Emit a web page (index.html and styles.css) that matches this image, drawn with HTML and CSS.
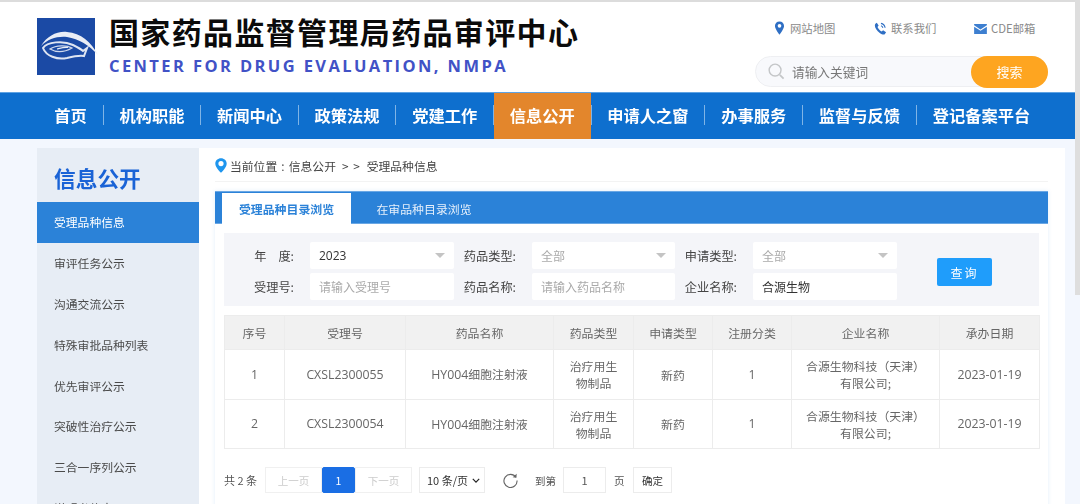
FILE: index.html
```html
<!DOCTYPE html>
<html lang="zh-CN">
<head>
<meta charset="utf-8">
<title>受理品种信息</title>
<link rel="stylesheet" href="styles.css">
</head>
<body>
<div class="shell">
<div class="page">
  <header class="top">
    <svg class="logo" viewBox="0 0 58 57" aria-hidden="true">
      <rect width="58" height="57" fill="#1b4aa5"/>
      <path d="M4 28C10 18 20 13 30 14C44 15 54 24 61 37C52 27 42 21 30 19C20 18 11 21 4 28Z" fill="#e9edf6"/>
      <path d="M6 30C10 24 26 22 36 27C40 29 44 31 46 33L50 30L47 38C42 37 38 38 30 40C20 42 9 38 6 30Z" fill="none" stroke="#dfe5f2" stroke-width="2"/>
      <path d="M13 31C19 27 30 27 35 30C28 34 20 35 13 31Z" fill="none" stroke="#cfd8ec" stroke-width="1.3"/>
      <path d="M20 31C24 30 27 29 31 29.500" fill="none" stroke="#e8edf6" stroke-width="1.100"/>
    </svg>
    <div class="brand">
      <div class="brand-cn">国家药品监督管理局药品审评中心</div>
      <div class="brand-en">CENTER FOR DRUG EVALUATION, NMPA</div>
    </div>
    <div class="top-right">
      <div class="links">
        <a class="link link-map">
          <svg class="ic" viewBox="0 0 12 16"><path d="M6 0.5C2.9 0.5 0.8 2.8 0.8 5.6C0.8 9 6 15.5 6 15.5S11.2 9 11.2 5.6C11.2 2.8 9.100 0.5 6 0.5ZM6 7.600A2.100 2.100 0 1 1 6 3.400A2.100 2.100 0 0 1 6 7.600Z" fill="#2f6fc4"/></svg>
          网站地图</a>
        <a class="link link-tel">
          <svg class="ic-w" viewBox="0 0 14 14"><path d="M3 .8 5 3.800 3.800 5.300C4.500 7.200 6.300 9.300 8.300 10.200L9.800 8.900 13 11 11.600 13.200C10.500 13.900 8.500 13.500 6.200 11.800 3.200 9.600.8 6.300.9 3.500 1 2.300 1.800 1.200 3 .8Z" fill="#2f6fc4"/><path d="M7.500 1.500C9.800 2 11.500 3.800 12 6.200M7.500 4C8.500 4.300 9.300 5 9.600 6.200" fill="none" stroke="#2f6fc4" stroke-width="1.200"/></svg>
          联系我们</a>
        <a class="link">
          <svg class="ic-m" viewBox="0 0 14 11"><path d="M0 0H14V1.500L7 6 0 1.500Z M0 3 7 7.500 14 3V11H0Z" fill="#3d7fd0"/></svg>
          CDE邮箱</a>
      </div>
      <div class="search">
        <svg class="search-ic" viewBox="0 0 18 18"><circle cx="7.500" cy="7.500" r="6.300" fill="none" stroke="#c4c6c8" stroke-width="1.500"/><path d="M12.500 12.500 16.500 16.500" stroke="#c4c6c8" stroke-width="1.800"/></svg>
        <span class="search-ph">请输入关键词</span>
        <span class="search-btn">搜索</span>
      </div>
    </div>
  </header>

  <nav class="nav">
    <a class="nav-item">首页</a><i class="sep"></i>
    <a class="nav-item">机构职能</a><i class="sep"></i>
    <a class="nav-item">新闻中心</a><i class="sep"></i>
    <a class="nav-item">政策法规</a><i class="sep"></i>
    <a class="nav-item">党建工作</a><i class="sep"></i>
    <a class="nav-item on">信息公开</a><i class="sep"></i>
    <a class="nav-item">申请人之窗</a><i class="sep"></i>
    <a class="nav-item">办事服务</a><i class="sep"></i>
    <a class="nav-item">监督与反馈</a><i class="sep"></i>
    <a class="nav-item">登记备案平台</a>
  </nav>

  <div class="body">
    <aside class="side">
      <h2 class="side-title">信息公开</h2>
      <a class="side-item on">受理品种信息</a>
      <a class="side-item">审评任务公示</a>
      <a class="side-item">沟通交流公示</a>
      <a class="side-item">特殊审批品种列表</a>
      <a class="side-item">优先审评公示</a>
      <a class="side-item">突破性治疗公示</a>
      <a class="side-item">三合一序列公示</a>
      <a class="side-item">说明书信息</a>
    </aside>
    <main class="main">
      <div class="crumb">
        <svg class="crumb-ic" viewBox="0 0 12 15"><path d="M6 0.300C2.800 0.300 0.300 2.700 0.300 5.700C0.300 9.300 6 14.800 6 14.800S11.700 9.300 11.700 5.700C11.700 2.700 9.200 0.300 6 0.300ZM6 8.200A2.600 2.600 0 1 1 6 3A2.600 2.600 0 0 1 6 8.200Z" fill="#1f96ee"/></svg>
        <span class="crumb-a">当前位置 : 信息公开</span><span class="crumb-gt">&gt; &gt;</span><span>受理品种信息</span>
      </div>
      <div class="panel">
        <div class="tabs">
          <a class="tab on">受理品种目录浏览</a>
          <a class="tab">在审品种目录浏览</a>
        </div>
        <div class="filter">
          <div class="grid">
            <label class="lab">年<b class="gap"></b>度:</label>
            <div class="field sel"><span class="val">2023</span><i class="caret"></i></div>
            <label class="lab">药品类型:</label>
            <div class="field sel"><span class="ph">全部</span><i class="caret"></i></div>
            <label class="lab">申请类型:</label>
            <div class="field sel"><span class="ph">全部</span><i class="caret"></i></div>
            <label class="lab">受理号:</label>
            <div class="field"><span class="ph">请输入受理号</span></div>
            <label class="lab">药品名称:</label>
            <div class="field"><span class="ph">请输入药品名称</span></div>
            <label class="lab">企业名称:</label>
            <div class="field"><span class="val">合源生物</span></div>
          </div>
          <a class="query">查询</a>
        </div>
        <table class="tbl">
          <colgroup>
            <col class="c1"><col class="c2"><col class="c3"><col class="c4"><col class="c5"><col class="c6"><col class="c7"><col class="c8">
          </colgroup>
          <thead>
            <tr><th>序号</th><th>受理号</th><th>药品名称</th><th>药品类型</th><th>申请类型</th><th>注册分类</th><th>企业名称</th><th>承办日期</th></tr>
          </thead>
          <tbody>
            <tr><td class="lat">1</td><td class="lat">CXSL2300055</td><td><span class="lat">HY004</span>细胞注射液</td><td>治疗用生<br>物制品</td><td>新药</td><td class="lat">1</td><td>合源生物科技（天津）<br>有限公司;</td><td class="lat">2023-01-19</td></tr>
            <tr><td class="lat">2</td><td class="lat">CXSL2300054</td><td><span class="lat">HY004</span>细胞注射液</td><td>治疗用生<br>物制品</td><td>新药</td><td class="lat">1</td><td>合源生物科技（天津）<br>有限公司;</td><td class="lat">2023-01-19</td></tr>
          </tbody>
        </table>
        <div class="pager">
          <span class="total">共 2 条</span>
          <div class="pages">
            <a class="pg">上一页</a><a class="pg cur">1</a><a class="pg">下一页</a>
          </div>
          <div class="size"><span>10 条/页</span>
            <svg class="chev" viewBox="0 0 10 6"><path d="M1 1 5 5 9 1" fill="none" stroke="#222" stroke-width="1.500"/></svg>
          </div>
          <svg class="refresh" viewBox="0 0 16 16"><path d="M13.800 4.500A7 7 0 1 0 15 8" fill="none" stroke="#666" stroke-width="1.200"/><path d="M14.600 .8 14.300 5 10.300 4.400Z" fill="#666"/></svg>
          <span class="to">到第</span>
          <span class="jump">1</span>
          <span class="unit">页</span>
          <a class="ok">确定</a>
        </div>
      </div>
    </main>
  </div>
</div>
<div class="scroll"><div class="thumb"></div></div>
</div>
</body>
</html>
```

FILE: styles.css
```css
* { box-sizing: border-box; }
html, body { margin: 0; height: 504px; overflow: hidden; }
body { font-family: "Noto Sans CJK SC", "Noto Sans", sans-serif; background: #f3f7fe; color: #333; }
a { text-decoration: none; color: inherit; }

.shell { display: flex; height: 504px; filter: blur(.35px); }
.page { flex: 1; min-width: 0; overflow: hidden; }
.scroll { width: 5px; }
.thumb { height: 295px; background: #dedede; }

.top { height: 92px; background: #fff; border-top: 2px solid #dcdcdc; display: flex; padding: 16px 27px 0 37px; }
.logo { width: 58px; height: 57px; flex: none; overflow: visible; }
.brand { margin-left: 14px; }
.brand-cn { font-size: 30px; font-weight: 700; line-height: 30px; letter-spacing: 1.350px; color: #0b0b0b; white-space: nowrap; margin-top: -2px; }
.brand-en { font-family: "Open Sans", sans-serif; font-size: 16.500px; font-weight: 700; line-height: 22px; letter-spacing: 2.400px; color: #4152c6; margin-top: 9px; white-space: nowrap; }
.top-right { margin-left: auto; width: 293px; display: flex; flex-direction: column; }
.links { display: flex; height: 20px; padding-left: 19px; font-size: 11.350px; color: #8a8a8a; }
.link { display: flex; align-items: center; white-space: nowrap; }
.link-map { width: 100px; }
.link-tel { width: 100px; }
.ic { width: 11px; height: 14px; margin-right: 5px; }
.ic-w { width: 13px; height: 13px; margin-right: 4px; }
.ic-m { width: 13px; height: 10px; margin-right: 4px; margin-top: 2px; }
.search { margin-top: 18px; height: 31px; display: flex; align-items: center; background: #f8f9fc; border: 1px solid #eeeff2; border-radius: 16px; padding-left: 12px; }
.search-ic { width: 17px; height: 17px; }
.search-ph { margin-left: 7px; font-size: 12.700px; color: #777; flex: 1; }
.search-btn { width: 77px; height: 32px; margin-right: -1px; border-radius: 16px; background: #fea520; color: #fff; font-size: 13px; display: flex; align-items: center; justify-content: center; }

.nav { height: 47px; background: #0e6fce; border-top: 1px solid #5fa3e3; display: flex; align-items: center; padding-left: 38.500px; }
.nav-item { height: 46px; padding: 0 15.800px 2px; font-size: 16.250px; font-weight: 700; color: #fff; display: flex; align-items: center; white-space: nowrap; }
.nav-item.on { background: #e3862c; }
.sep { width: 1px; height: 20px; margin-bottom: 2px; background: #7fb4e6; flex: none; }

.body { display: flex; padding: 9px 0 0 37px; align-items: flex-start; }
.side { width: 162px; background: #e7edf5; flex: none; height: 400px; overflow: hidden; }
.side-title { margin: 0; height: 54px; padding: 15px 0 0 17px; font-size: 21.700px; line-height: 30px; font-weight: 700; color: #1a63d6; }
.side-item { display: flex; align-items: center; height: 40.800px; padding: 0 0 1px 17px; font-size: 11.800px; color: #4a4a4a; white-space: nowrap; }
.side-item.on { background: #2b82d8; color: #fff; }

.main { width: 866px; height: 400px; background: #fff; padding: 0 17px 0 16px; overflow: hidden; }
.crumb { height: 34px; display: flex; align-items: center; padding-top: 2px; border-bottom: 1px solid #f3f3f3; font-size: 11.800px; color: #444; white-space: nowrap; }
.crumb-ic { width: 12px; height: 15px; margin-right: 3px; }
.crumb-a { word-spacing: 1.500px; }
.crumb-gt { margin: 0 6px 0 6px; letter-spacing: 1px; }

.panel { margin-top: 9px; height: 360px; box-shadow: 0 0 4px rgba(43, 130, 216, .14); }
.tabs { height: 33px; background: #2b82d8; border-top: 1px solid #6aa7e4; border-bottom: 1px solid #6aa7e4; display: flex; padding: 1px 0 0 7px; }
.tab { height: 30px; display: flex; align-items: center; justify-content: center; font-size: 11.900px; color: #e6f0fb; white-space: nowrap; }
.tab.on { width: 129px; height: 31px; background: #fff; color: #2b82d8; font-weight: 700; }
.tab + .tab { width: 146px; }

.filter { margin: 9px 9px 0; height: 73px; background: #f4f5f9; display: flex; padding-top: 9px; }
.grid { display: grid; grid-template-columns: 86px 144px 78px 143px 78px 144px; grid-auto-rows: 27px; row-gap: 4px; width: 673px; height: 58px; }
.lab { display: flex; align-items: center; justify-content: flex-end; font-size: 12.200px; color: #444; padding-right: 16px; white-space: nowrap; }
.gap { width: 12px; }
.field { display: flex; align-items: center; background: #fff; border-radius: 2px; padding-left: 9px; font-size: 12px; }
.sel { justify-content: space-between; padding-right: 9px; }
.val { color: #333; font-family: "Open Sans", "Noto Sans CJK SC", sans-serif; }
.ph { color: #aaa; }
.caret { width: 0; height: 0; border-left: 5px solid transparent; border-right: 5px solid transparent; border-top: 5px solid #c4c4c4; }
.query { width: 55px; height: 28px; margin: 16px 0 0 40px; background: #1f9dfb; border-radius: 2px; color: #fff; font-size: 12px; letter-spacing: 2px; display: flex; align-items: center; justify-content: center; }

.tbl { margin: 9px 0 0 9px; width: 815px; height: 133px; table-layout: fixed; border-collapse: collapse; border: 1px solid #e8e8e8; }
.c1 { width: 60px; } .c2 { width: 121px; } .c3 { width: 148px; } .c4 { width: 80px; }
.c5 { width: 79px; } .c6 { width: 79px; } .c7 { width: 148px; } .c8 { width: 100px; }
.tbl th, .tbl td { border: 1px solid #ececec; text-align: center; font-family: "Noto Sans CJK SC", sans-serif; font-size: 11.900px; font-weight: 400; color: #666; padding: 0; }
.tbl th { height: 34px; background: #f1f1f1; }
.tbl td { height: 49.500px; line-height: 17px; background: #fff; }
.tbl .lat, .lat { font-family: "Open Sans", sans-serif; font-size: 12.300px; }

.pager { display: flex; align-items: center; height: 26px; margin: 18px 0 0 9px; font-size: 10.500px; color: #555; white-space: nowrap; }
.total { font-size: 11px; width: 33px; }
.pages { display: flex; margin-left: 8px; }
.pg { width: 57px; height: 26px; display: flex; align-items: center; justify-content: center; border: 1px solid #f0f0f0; color: #ccc; }
.pg.cur { width: 33px; background: #1a6ee4; border-color: #1a6ee4; color: #fff; border-radius: 2px; }
.size { width: 66px; height: 26px; margin-left: 7px; border: 1px solid #ececec; display: flex; align-items: center; justify-content: space-between; padding: 0 4px 0 7px; font-size: 11px; color: #333; }
.chev { width: 8px; height: 5px; }
.refresh { width: 15px; height: 15px; margin-left: 18px; }
.to { margin-left: 17px; }
.jump { width: 43px; height: 26px; margin-left: 7px; display: flex; align-items: center; justify-content: center; border: 1px solid #ececec; font-size: 11px; }
.unit { margin-left: 8px; width: 11px; }
.ok { width: 39px; height: 26px; margin-left: 8px; display: flex; align-items: center; justify-content: center; border: 1px solid #ececec; color: #333; }
```
